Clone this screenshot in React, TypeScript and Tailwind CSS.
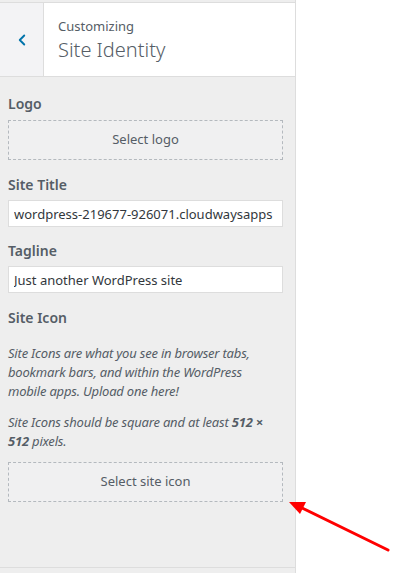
import { ChevronLeft } from "lucide-react";

const font = { fontFamily: '"Segoe UI", "Noto Sans", "Open Sans", sans-serif' };

function Label({ children }: { children: React.ReactNode }) {
  return <div className="text-[14px] font-semibold leading-[20px] text-[#555d66]">{children}</div>;
}

function SelectButton({ children }: { children: React.ReactNode }) {
  return (
    <button className="flex h-[40px] w-full items-center justify-center border border-dashed border-[#b4b9be] bg-[#f0f0f1] text-[13px] text-[#555d66]">
      {children}
    </button>
  );
}

function TextInput({ value }: { value: string }) {
  return (
    <input
      readOnly
      value={value}
      className="h-[27px] w-full border border-[#ddd] bg-white px-[5px] text-[13px] text-[#32373c] outline-none"
      style={font}
    />
  );
}

export default function App() {
  return (
    <div className="relative h-[573px] w-[420px] overflow-hidden bg-white" style={font}>
      <div className="flex h-full w-[296px] flex-col border-r border-[#ddd] bg-[#eee]">
        <div className="h-[3px] border-b border-[#ddd]" />
        <div className="flex h-[74px] border-b border-[#ddd] bg-white">
          <button className="flex w-[44px] items-center justify-center border-r border-[#ddd] bg-[#f3f3f5] text-[#0073aa]">
            <ChevronLeft size={18} strokeWidth={2.5} />
          </button>
          <div className="flex flex-col justify-center pl-[14px] pt-[2px]">
            <span className="text-[13px] leading-[18px] text-[#555d66]">Customizing</span>
            <span className="text-[20px] font-light leading-[30px] text-[#555d66]">Site Identity</span>
          </div>
        </div>

        <div className="flex flex-1 flex-col px-[8px] pt-[17px]">
          <Label>Logo</Label>
          <div className="mt-[6px] w-[275px]">
            <SelectButton>Select logo</SelectButton>
          </div>

          <div className="mt-[15px]">
            <Label>Site Title</Label>
          </div>
          <div className="mt-[5px] w-[275px]">
            <TextInput value="wordpress-219677-926071.cloudwaysapps" />
          </div>

          <div className="mt-[14px]">
            <Label>Tagline</Label>
          </div>
          <div className="mt-[5px] w-[275px]">
            <TextInput value="Just another WordPress site" />
          </div>

          <div className="mt-[15px]">
            <Label>Site Icon</Label>
          </div>
          <p className="mt-[16px] text-[13px] italic leading-[19px] tracking-[-0.2px] text-[#555d66]">
            Site Icons are what you see in browser tabs,
            <br />
            bookmark bars, and within the WordPress
            <br />
            mobile apps. Upload one here!
          </p>
          <p className="mt-[12px] text-[13px] italic leading-[19px] tracking-[-0.2px] text-[#555d66]">
            Site Icons should be square and at least <strong>512 ×</strong>
            <br />
            <strong>512</strong> pixels.
          </p>
          <div className="mt-[11px] w-[275px]">
            <SelectButton>Select site icon</SelectButton>
          </div>
        </div>
        <div className="h-[6px] border-t border-[#ddd]" />
      </div>

      <svg className="absolute left-0 top-0" width="420" height="573" viewBox="0 0 420 573">
        <line x1="388" y1="550" x2="300" y2="507" stroke="#ff0000" strokeWidth="3" strokeLinecap="round" />
        <polygon points="289,502 306,502 300,514" fill="#ff0000" />
      </svg>
    </div>
  );
}
